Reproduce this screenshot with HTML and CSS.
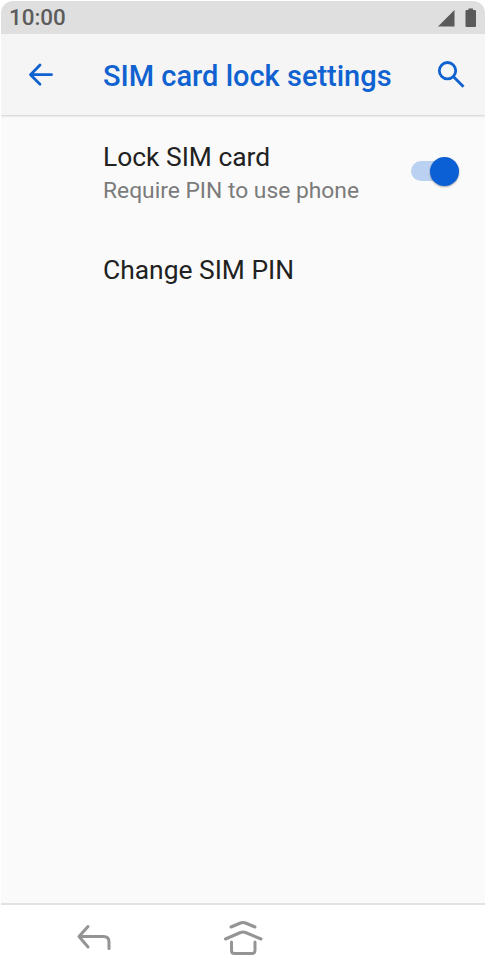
FILE: index.html
```
<!DOCTYPE html>
<html lang="en">
<head>
  <meta charset="UTF-8">
  <title>SIM card lock settings</title>
  <meta name="viewport" content="width=device-width, initial-scale=1">
  <link rel="stylesheet" href="styles.css">
</head>
<body>
  <div class="phone">

    <!-- Status bar -->
    <div class="status-bar">
      <span class="clock">10:00</span>
      <svg class="status-icons" width="40" height="20" viewBox="0 0 40 20">
        <path d="M17.500 2v16.500H1z"/>
        <path d="M31.500 .5h4.500v1.500h2q1 0 1 1v15q0 1-1 1h-8.500q-1 0-1-1v-15q0-1 1-1h2z"/>
      </svg>
    </div>

    <!-- Title bar -->
    <header class="app-bar">
      <button class="icon-button back" aria-label="Back">
        <svg width="26" height="24" viewBox="0 0 26 24">
          <path d="M13 2L3.500 11.700l9.500 9.500M3.500 11.700h21"/>
        </svg>
      </button>
      <h1>SIM card lock settings</h1>
      <button class="icon-button search" aria-label="Search">
        <svg width="30" height="28" viewBox="0 0 30 28">
          <circle cx="12.500" cy="9.700" r="8.200"/>
          <path d="M18 15.300l10.500 10.500"/>
        </svg>
      </button>
    </header>

    <!-- Settings -->
    <main class="settings">
      <div class="item">
        <div class="item-text">
          <div class="item-title">Lock SIM card</div>
          <div class="item-summary">Require PIN to use phone</div>
        </div>
        <div class="switch" role="switch" aria-checked="true">
          <div class="thumb"></div>
        </div>
      </div>
      <div class="item">
        <div class="item-title">Change SIM PIN</div>
      </div>
    </main>

    <!-- Navigation bar -->
    <nav class="nav-bar">
      <svg class="nav-back" width="36" height="28" viewBox="0 0 36 28">
        <path d="M12 2.500L3 12.500l9 10.500M3 12.500h24.500q5.500 0 5.500 5.500v6.500"/>
      </svg>
      <svg class="nav-home" width="40" height="38" viewBox="0 0 40 38">
        <path d="M8 8l9.500-4q2.500-1 5 0L32 8"/>
        <path d="M2.500 20l15-6.500q2.500-1 5 0L38 20"/>
        <path d="M8.500 23v8.500q0 3 3 3h17.500q3 0 3-3v-8.500"/>
      </svg>
    </nav>

  </div>
</body>
</html>
```
FILE: styles.css
```
body {
  margin: 0;
  background: #fff;
  font-family: Roboto, "Liberation Sans", sans-serif;
}

.phone {
  box-sizing: border-box;
  display: flex;
  flex-direction: column;
  height: 972px;
  padding: 1px 1px 0;
}

/* Status bar */
.status-bar {
  box-sizing: border-box;
  display: flex;
  align-items: center;
  justify-content: space-between;
  height: 33px;
  padding: 0 8px;
  background: #dfdfdf;
  border-radius: 12px 12px 0 0;
}

.clock {
  color: #5c5c5c;
  font-size: 22.4px;
  font-weight: 500;
  line-height: 33px;
}

.status-icons {
  fill: #5a5a5a;
}

/* Title bar */
.app-bar {
  box-sizing: border-box;
  position: relative;
  display: flex;
  align-items: center;
  height: 81px;
  padding: 0 20px 0 26px;
  background: #f5f5f5;
  box-shadow: 0 1px 2px rgba(0, 0, 0, 0.18);
  clip-path: inset(0 0 -4px);
}

.app-bar h1 {
  flex: 1;
  margin: 2px 0 0 50px;
  color: #0f62d0;
  font-size: 29px;
  font-weight: 500;
  line-height: 40px;
  white-space: nowrap;
}

.icon-button {
  display: flex;
  padding: 0;
  border: none;
  background: none;
}

.icon-button svg {
  fill: none;
  stroke: #0f62d0;
  stroke-width: 2.8;
}

.back svg {
  stroke-linecap: round;
  stroke-linejoin: round;
}

/* Settings */
.settings {
  flex: 1;
  padding: 25px 26px 0 102px;
  background: #fafafa;
}

.item {
  display: flex;
  align-items: center;
  justify-content: space-between;
  margin-bottom: 45px;
}

.item-title {
  color: #212121;
  font-size: 26.4px;
  line-height: 34px;
}

.item-summary {
  color: #7b7b7b;
  font-size: 22.8px;
  line-height: 34px;
}

.switch {
  display: flex;
  align-items: center;
  justify-content: flex-end;
  width: 48px;
  height: 20px;
  margin-bottom: 6px;
  border-radius: 10px;
  background: #bad1f2;
}

.thumb {
  width: 29px;
  height: 29px;
  border-radius: 50%;
  background: #0b60d5;
  box-shadow: 0 1px 2px rgba(0, 0, 0, 0.35);
}

/* Navigation bar */
.nav-bar {
  display: flex;
  align-items: flex-start;
  height: 67px;
  padding: 0 75px;
  border-top: 2px solid #e2e2e2;
}

.nav-bar svg {
  fill: none;
  stroke: #949494;
  stroke-width: 3;
  stroke-linecap: round;
  stroke-linejoin: round;
}

.nav-back {
  margin-top: 19px;
}

.nav-home {
  margin: 14px 0 0 111px;
}
```
